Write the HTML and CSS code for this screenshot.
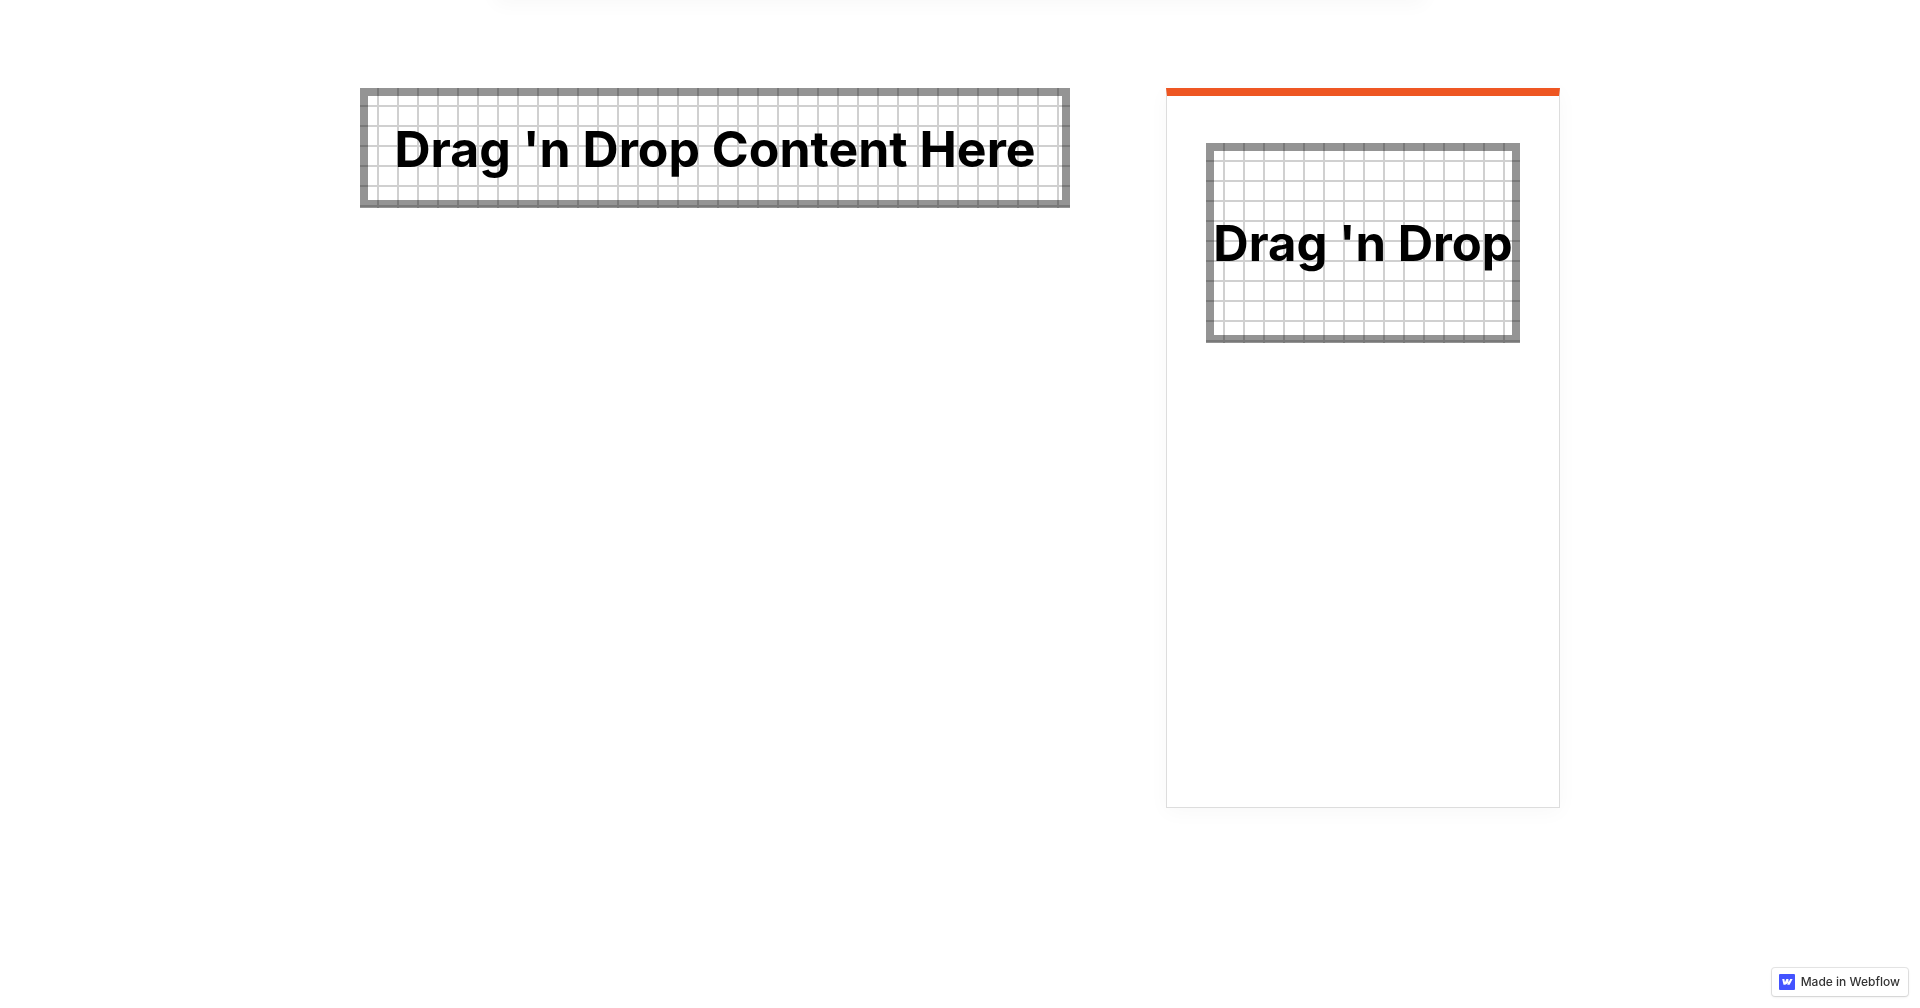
FILE: index.html
```
<!DOCTYPE html>
<html lang="en">
<head>
  <meta charset="utf-8">
  <meta name="viewport" content="width=device-width, initial-scale=1">
  <title>Content with sidebar</title>
  <link rel="stylesheet" href="styles.css">
</head>
<body>
  <div class="top-shadow"></div>
  <div class="container">
    <main class="main">
      <div class="drop-zone">Drag 'n Drop Content Here</div>
    </main>
    <aside class="sidebar">
      <div class="drop-zone drop-zone-tall">Drag 'n Drop</div>
    </aside>
  </div>
  <a class="badge" href="#">
    <svg class="badge-icon" viewBox="0 0 16 16" aria-hidden="true">
      <rect width="16" height="16" rx="1" fill="#4353ff"/>
      <path fill="#fff" d="M13.600 5 10.600 10.800H8.200l.8-2.400c-.9 1.500-2.200 2.300-4.500 2.400L3.200 5h2.200l.5 3.300L7.400 5h2l.2 3.300L11.200 5z"/>
    </svg>
    <span>Made in Webflow</span>
  </a>
</body>
</html>
```
FILE: styles.css
```
* {
  box-sizing: border-box;
}

body {
  margin: 0;
  background: #fff;
  color: #000;
  font-family: Inter, "Liberation Sans", sans-serif;
}

.top-shadow {
  position: absolute;
  top: -40px;
  left: 50%;
  width: 930px;
  max-width: 100%;
  height: 40px;
  transform: translateX(-50%);
  box-shadow: 0 4px 20px rgba(0, 0, 0, 0.03);
}

.container {
  display: grid;
  grid-template-columns: minmax(0, 1fr) 394px;
  gap: 96px;
  max-width: 1200px;
  margin: 0 auto;
  padding: 88px 0 80px;
}

.drop-zone {
  display: flex;
  align-items: center;
  justify-content: center;
  min-height: 120px;
  padding-top: 2px;
  border: 8px solid rgba(0, 0, 0, 0.42);
  background-color: #fff;
  background-image:
    linear-gradient(to right, #d0d0d0 0, #d0d0d0 2px, rgba(208, 208, 208, 0) 2px),
    linear-gradient(to bottom, #d0d0d0 0, #d0d0d0 2px, rgba(208, 208, 208, 0) 2px);
  background-position: 9px 9px;
  background-size: 20px 20px;
  font-size: 50px;
  font-weight: 700;
  line-height: 60px;
  white-space: nowrap;
}

.drop-zone-tall {
  min-height: 200px;
  font-size: 49px;
}

.sidebar {
  min-height: 720px;
  padding: 47px 39px;
  border: 1px solid #ddd;
  border-top: 8px solid #ee5622;
  background: #fff;
  box-shadow: 0 4px 20px rgba(0, 0, 0, 0.03);
}

.badge {
  position: fixed;
  right: 12px;
  bottom: 12px;
  display: flex;
  align-items: center;
  gap: 6px;
  padding: 6px 8px 6px 7px;
  border-radius: 3px;
  background: #fff;
  box-shadow: 0 0 0 1px rgba(0, 0, 0, 0.1), 0 1px 3px rgba(0, 0, 0, 0.1);
  color: #333;
  font-size: 12px;
  font-weight: 500;
  line-height: 16px;
  text-decoration: none;
}

.badge-icon {
  width: 16px;
  height: 16px;
}
```
